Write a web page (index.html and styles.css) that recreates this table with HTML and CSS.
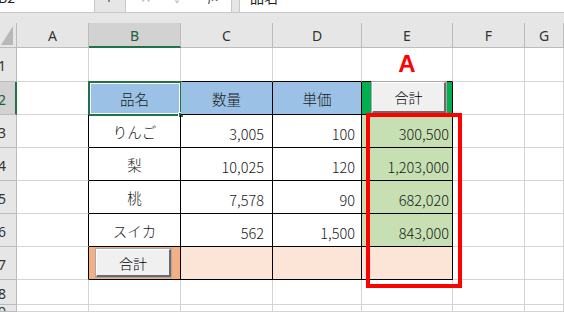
FILE: index.html
```html
<!DOCTYPE html>
<html lang="ja">
<head>
<meta charset="utf-8">
<link rel="stylesheet" href="styles.css">
</head>
<body>
<div class="app">
  <div class="fbar">
    <div class="namebox"><span class="cut">B2</span></div>
    <div class="grip"><span class="dot"></span></div>
    <div class="fxbox"><span class="cut ico">✕</span><span class="cut ico">✓</span><span class="cut fx">fx</span></div>
    <div class="gap2"></div>
    <div class="formula"><span class="cut">品名</span></div>
  </div>
  <div class="band"></div>
  <div class="sheet">
    <!-- header row -->
    <div class="corner"><svg width="16" height="24" viewBox="0 0 16 24"><polygon points="1,22 13,22 13,3" fill="#b8b8b8"/></svg></div>
    <div class="ch">A</div>
    <div class="ch sel">B</div>
    <div class="ch">C</div>
    <div class="ch">D</div>
    <div class="ch">E</div>
    <div class="ch">F</div>
    <div class="ch">G</div>

    <!-- row 1 -->
    <div class="rh">1</div>
    <div class="cell"></div>
    <div class="cell tb"></div>
    <div class="cell tb"></div>
    <div class="cell tb"></div>
    <div class="cell tb mark"><span>A</span></div>
    <div class="cell"></div>
    <div class="cell"></div>

    <!-- row 2 -->
    <div class="rh rsel">2</div>
    <div class="cell lb"></div>
    <div class="cell t blue c active">品名<span class="selbox"></span><span class="handle"></span></div>
    <div class="cell t blue c">数量</div>
    <div class="cell t blue c">単価</div>
    <div class="cell t green"><span class="btn btn-e">合計</span></div>
    <div class="cell"></div>
    <div class="cell"></div>

    <!-- row 3 -->
    <div class="rh">3</div>
    <div class="cell lb"></div>
    <div class="cell t c">りんご</div>
    <div class="cell t r rc">3,005</div>
    <div class="cell t r rd">100</div>
    <div class="cell t r re lgreen">300,500</div>
    <div class="cell"></div>
    <div class="cell"></div>

    <!-- row 4 -->
    <div class="rh">4</div>
    <div class="cell lb"></div>
    <div class="cell t c">梨</div>
    <div class="cell t r rc">10,025</div>
    <div class="cell t r rd">120</div>
    <div class="cell t r re lgreen">1,203,000</div>
    <div class="cell"></div>
    <div class="cell"></div>

    <!-- row 5 -->
    <div class="rh">5</div>
    <div class="cell lb"></div>
    <div class="cell t c">桃</div>
    <div class="cell t r rc">7,578</div>
    <div class="cell t r rd">90</div>
    <div class="cell t r re lgreen">682,020</div>
    <div class="cell"></div>
    <div class="cell"></div>

    <!-- row 6 -->
    <div class="rh">6</div>
    <div class="cell lb"></div>
    <div class="cell t c">スイカ</div>
    <div class="cell t r rc">562</div>
    <div class="cell t r rd">1,500</div>
    <div class="cell t r re lgreen">843,000</div>
    <div class="cell"></div>
    <div class="cell"></div>

    <!-- row 7 -->
    <div class="rh">7</div>
    <div class="cell lb"></div>
    <div class="cell t orange"><span class="btn btn-b">合計</span></div>
    <div class="cell t lorange"></div>
    <div class="cell t lorange"></div>
    <div class="cell t lorange"></div>
    <div class="cell"></div>
    <div class="cell"></div>

    <!-- row 8 -->
    <div class="rh">8</div>
    <div class="cell"></div>
    <div class="cell"></div>
    <div class="cell"></div>
    <div class="cell"></div>
    <div class="cell"></div>
    <div class="cell"></div>
    <div class="cell"></div>

    <!-- row 9 -->
    <div class="rh last"><span>9</span></div>
    <div class="cell"></div>
    <div class="cell"></div>
    <div class="cell"></div>
    <div class="cell"></div>
    <div class="cell"></div>
    <div class="cell"></div>
    <div class="cell"></div>

    <div class="redbox"></div>
  </div>
</div>
</body>
</html>
```

FILE: styles.css
```css
* { box-sizing: border-box; }
html, body { margin: 0; padding: 0; }
body {
  width: 564px;
  height: 312px;
  overflow: hidden;
  background: #e6e6e6;
  font-family: "Noto Sans CJK JP", "Noto Sans", sans-serif;
}
.app { width: 564px; height: 312px; display: flex; flex-direction: column; }

/* formula bar */
.fbar {
  height: 13px;
  display: flex;
  background: #e6e6e6;
  border-bottom: 1px solid #c8c8c8;
  flex: none;
}
.namebox, .fxbox, .formula {
  background: #fff;
  overflow: hidden;
  display: flex;
  align-items: flex-start;
}
.namebox { width: 95px; border-right: 1px solid #c8c8c8; }
.grip { width: 30px; display: flex; justify-content: center; align-items: flex-start; }
.dot { width: 2px; height: 2px; background: #8a8a8a; margin-left: -2px; }
.fxbox { width: 106px; border-left: 1px solid #c8c8c8; }
.gap2 { width: 8px; border-left: 1px solid #c8c8c8; }
.formula { flex: 1; border-left: 1px solid #c8c8c8; padding-left: 10px; }
.cut {
  display: block;
  font-size: 14px;
  line-height: 14px;
  margin-top: -10px;
  color: #222;
}
.namebox .cut { margin-left: -2px; }
.ico { color: #bcbcbc; margin-left: 14px; width: 22px; }
.ico + .ico { margin-left: 12px; }
.fx { color: #555; font-style: italic; margin-left: 12px; font-family: "Liberation Serif", serif; }

.band { height: 10px; flex: none; background: #e6e6e6; }

/* sheet */
.sheet {
  position: relative;
  flex: 1;
  display: grid;
  grid-template-columns: 17px 72px 92px 92px 89px 91px 72px 1fr;
  grid-template-rows: 25px 34px 33px 33px 33px 33px 33px 33px 25px 1fr;
  background: #fff;
  overflow: hidden;
}
.corner {
  background: #e6e6e6;
  border-right: 1px solid #bcbcbc;
  border-bottom: 1px solid #bcbcbc;
}
.corner svg { display: block; }
.ch {
  background: #e6e6e6;
  border-right: 1px solid #bcbcbc;
  border-bottom: 1px solid #bcbcbc;
  display: flex;
  align-items: center;
  justify-content: center;
  font-family: "Noto Sans", sans-serif;
  font-size: 14px;
  color: #333;
  padding-top: 1px;
}
.ch.sel {
  background: #d2d2d2;
  border-bottom: 2px solid #217346;
  color: #1e5e38;
}
.rh {
  background: #e6e6e6;
  border-right: 1px solid #bcbcbc;
  border-bottom: 1px solid #bcbcbc;
  display: flex;
  align-items: center;
  font-family: "Noto Sans", sans-serif;
  font-size: 14px;
  color: #333;
  text-indent: -2px;
  overflow: hidden;
  padding-top: 2px;
}
.rh.last {
  align-items: flex-start;
  padding-top: 0;
  line-height: 14px;
}
.rh.rsel {
  background: #d2d2d2;
  border-right: 2px solid #217346;
  color: #1e5e38;
}

.cell {
  border-right: 1px solid #d4d4d4;
  border-bottom: 1px solid #d4d4d4;
  display: flex;
  align-items: center;
  font-size: 14.5px;
  font-weight: 300;
  color: #1a1a1a;
  position: relative;
  white-space: nowrap;
}
.cell.t { border-right-color: #000; border-bottom-color: #000; }
.cell.tb { border-bottom-color: #000; }
.cell.lb { border-right-color: #000; }
.c { justify-content: center; }
.r { justify-content: flex-end; padding-top: 4px; }
.rc { padding-right: 8px; }
.rd { padding-right: 6px; }
.re { padding-right: 3px; }

.blue { background: #9bc2e6; }
.green { background: #00b050; }
.lgreen { background: #c6e0b4; }
.orange { background: #f4b084; }
.lorange { background: #fce4d6; }

.mark {
  justify-content: center;
  align-items: flex-end;
  font-family: "Liberation Sans", sans-serif;
  font-weight: bold;
  font-size: 24px;
  line-height: 24px;
  color: #ff0000;
  padding-bottom: 5px;
}

.selbox {
  position: absolute;
  left: -1px;
  top: -1px;
  right: -2px;
  bottom: -2px;
  border: 2px solid #217346;
  box-shadow: inset 0 0 0 1px #fff;
}
.handle {
  position: absolute;
  right: -4px;
  bottom: -4px;
  width: 6px;
  height: 6px;
  background: #217346;
  border: 1px solid #fff;
}

.btn {
  position: absolute;
  display: flex;
  align-items: center;
  justify-content: center;
  background: #f0f0f0;
  border-top: 1px solid #fff;
  border-left: 1px solid #fff;
  border-right: 2px solid #6b6b6b;
  border-bottom: 2px solid #6b6b6b;
  box-shadow: 0 0 0 1px #a8a8a8;
  font-size: 14px;
  font-weight: 300;
  color: #000;
}
.btn-e { left: 10px; top: 0; width: 74px; height: 31px; }
.btn-b { left: 7px; top: 2px; width: 75px; height: 28px; }

.redbox {
  position: absolute;
  left: 366px;
  top: 90px;
  width: 96px;
  height: 175px;
  border: 4px solid #ff0000;
  pointer-events: none;
}
```
